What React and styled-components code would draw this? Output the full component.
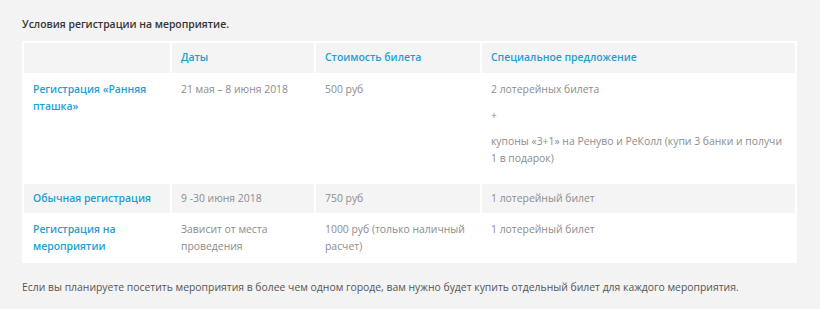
import React from 'react'
import styled, { createGlobalStyle } from 'styled-components'

const GlobalStyle = createGlobalStyle`
  body {
    margin: 0;
    background: #f3f3f3;
    font-family: "Open Sans", "Liberation Sans", sans-serif;
  }
`

const Page = styled.section`
  padding: 16px 23px 20px 22px;
  font-size: 10.4px;
  line-height: 17px;
`

const Title = styled.p`
  margin: 0 0 8px;
  color: #333;
  font-weight: 600;
`

const Note = styled.p`
  margin: 16px 0 0;
  color: #555;
`

const Table = styled.table`
  width: 100%;
  background: #fff;
  border-spacing: 2px;
  table-layout: fixed;
`

const Head = styled.th`
  width: ${p => p.w}px;
  background: #f4f4f4;
  color: #1c9fd3;
  font-weight: 600;
  text-align: left;
  padding: 6px 8px 7px 9px;
`

const Row = styled.tr`
  background: ${p => (p.shaded ? '#f4f4f4' : '#fff')};
`

const Cell = styled.td`
  vertical-align: top;
  padding: 6px 8px 6px 9px;
  color: #8c8c8c;
  p {
    margin: 0 0 9px;
  }
`

const Name = styled(Cell)`
  color: #1c9fd3;
  font-weight: 600;
`

const rows = [
  {
    name: 'Регистрация «Ранняя пташка»',
    dates: '21 мая – 8 июня 2018',
    price: '500 руб',
    offer: ['2 лотерейных билета', '+', 'купоны «3+1» на Ренуво и РеКолл (купи 3 банки и получи 1 в подарок)'],
  },
  {
    name: 'Обычная регистрация',
    dates: '9 -30 июня 2018',
    price: '750 руб',
    offer: ['1 лотерейный билет'],
    shaded: true,
  },
  {
    name: 'Регистрация на мероприятии',
    dates: 'Зависит от места проведения',
    price: '1000 руб (только наличный расчет)',
    offer: ['1 лотерейный билет'],
  },
]

const App = () => {
  return (
    <Page>
      <GlobalStyle />
      <Title>Условия регистрации на мероприятие.</Title>
      <Table>
        <thead>
          <tr>
            <Head w={129}></Head>
            <Head w={125}>Даты</Head>
            <Head w={147}>Стоимость билета</Head>
            <Head>Специальное предложение</Head>
          </tr>
        </thead>
        <tbody>
          {rows.map(r => (
            <Row key={r.name} shaded={r.shaded}>
              <Name>{r.name}</Name>
              <Cell>{r.dates}</Cell>
              <Cell>{r.price}</Cell>
              <Cell>
                {r.offer.length > 1
                  ? r.offer.map(t => <p key={t}>{t}</p>)
                  : r.offer[0]}
              </Cell>
            </Row>
          ))}
        </tbody>
      </Table>
      <Note>
        Если вы планируете посетить мероприятия в более чем одном городе, вам нужно будет купить отдельный билет для каждого мероприятия.
      </Note>
    </Page>
  )
}

export default App
